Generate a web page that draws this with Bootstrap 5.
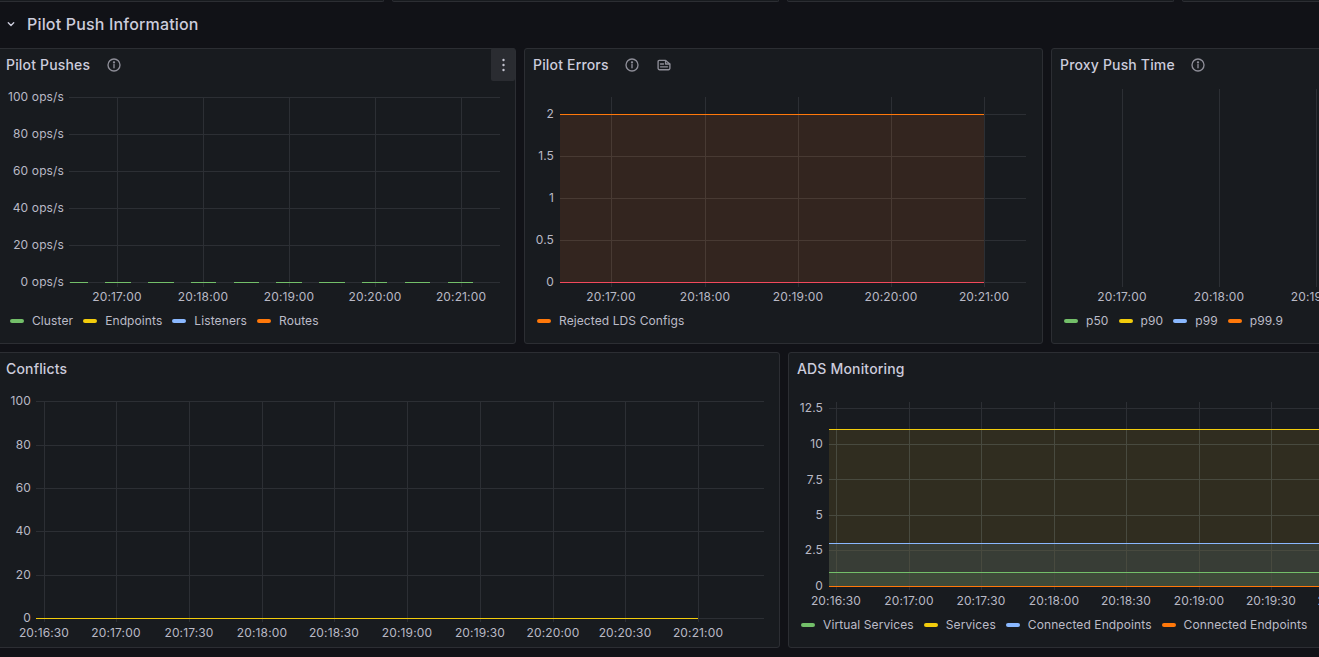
<!DOCTYPE html>
<html lang="en">
<head>
<meta charset="utf-8">
<title>Pilot Push Information</title>
<link href="https://cdn.jsdelivr.net/npm/bootstrap@5.3.0/dist/css/bootstrap.min.css" rel="stylesheet">
<style>
html, body { height: 100%; }
body { background: #111217; color: #ccccdc; font-family: Inter, "Liberation Sans", sans-serif; overflow: hidden; letter-spacing: .01071em; }
.dash-canvas { margin-left: -3px; width: 1700px; }
.stub-row { height: 2px; }
.stub-piece { width: 387px; height: 2px; border: 1px solid #2c2e33; border-top: 0; border-radius: 0 0 3px 3px; background: #181b1f; }
.section-row { height: 46px; padding-left: 9px; padding-bottom: 2px; font-size: 16px; font-weight: 500; color: #ccccdc; line-height: 1; }
.section-chevron { width: 10px; height: 10px; margin-right: 11px; }
.dash-panel { --bs-card-bg: #181b1f; --bs-card-border-color: #2c2e33; --bs-card-border-radius: 3px; --bs-card-color: #ccccdc; height: 296px; flex: none; }
.w-third { width: 519px; }
.w-half { width: 783px; }
.panel-head { height: 32px; padding-left: 8px; font-size: 14px; font-weight: 500; color: #ccccdc; }
.head-title { margin-top: -2px; }
.head-icon { width: 14px; height: 14px; margin-left: 16.6px; color: #8e8e98; flex: none; }
.head-icon + .head-icon { margin-left: 18px; }
.kebab-btn { width: 24px; height: 33px; margin-top: -1px; background: #2a2c31; border-radius: 2px; }
.plot { display: block; overflow: hidden; }
.plot text { font-family: Inter, "Liberation Sans", sans-serif; font-size: 12px; fill: #b9b9c5; letter-spacing: .13px; }
.gl { stroke: #2c2f34; stroke-width: 1; fill: none; shape-rendering: crispEdges; }
.legend-row { height: 22px; padding-left: 12px; gap: 10px; font-size: 12px; letter-spacing: .1px; color: #bcbcc8; white-space: nowrap; }
.swatch { width: 14px; height: 4px; border-radius: 2px; margin-right: 8px; flex: none; }
.c-green { background: #73bf69; }
.c-yellow { background: #f2cc0c; }
.c-blue { background: #8ab8ff; }
.c-orange { background: #ff780a; }
</style>
</head>
<body>
<div class="dash-canvas">
  <div class="stub-row d-flex gap-2">
    <div class="stub-piece"></div><div class="stub-piece"></div><div class="stub-piece"></div><div class="stub-piece"></div>
  </div>
  <div class="section-row d-flex align-items-center">
    <svg class="section-chevron" viewBox="0 0 10 10" fill="none" stroke="#ccccdc" stroke-width="1.4" stroke-linecap="round" stroke-linejoin="round"><path d="M2.3 3.8 5 6.4 7.7 3.8"/></svg>
    <span>Pilot Push Information</span>
  </div>

  <div class="d-flex gap-2 mb-2">
    <div class="card dash-panel w-third">
      <div class="panel-head d-flex align-items-center">
        <span class="head-title">Pilot Pushes</span>
        <svg class="head-icon" viewBox="0 0 14 14" fill="none" stroke="currentColor" stroke-width="1.35"><circle cx="7" cy="7" r="6"/><path d="M7 6.6v3.2" stroke-linecap="round"/><circle cx="7" cy="4.3" r=".5" fill="currentColor"/></svg>
        <div class="kebab-btn ms-auto d-flex flex-column align-items-center justify-content-center gap-1">
          <svg width="3" height="14" viewBox="0 0 3 14" fill="#c4c4d0"><circle cx="1.5" cy="2" r="1.2"/><circle cx="1.5" cy="7" r="1.2"/><circle cx="1.5" cy="12" r="1.2"/></svg>
        </div>
      </div>
      <svg class="plot" width="517" height="229" viewBox="-2 81 517 229">
        <path class="gl" d="M69 97.5H500M69 134.5H500M69 171.5H500M69 208.5H500M69 245.5H500M69 282.5H500M117.5 97V287M203.5 97V287M289.5 97V287M375.5 97V287M461.5 97V287"/>
        <path d="M70 282.5H88M105 282.5H131M148 282.5H174M191 282.5H216M234 282.5H259M276 282.5H302M319 282.5H345M362 282.5H387M405 282.5H430M448 282.5H473" stroke="#73bf69" stroke-width="1" fill="none"/>
        <g text-anchor="end">
          <text x="64" y="101">100 ops/s</text><text x="64" y="138">80 ops/s</text><text x="64" y="175">60 ops/s</text><text x="64" y="212">40 ops/s</text><text x="64" y="249">20 ops/s</text><text x="64" y="286">0 ops/s</text>
        </g>
        <g text-anchor="middle">
          <text x="117" y="301">20:17:00</text><text x="203" y="301">20:18:00</text><text x="289" y="301">20:19:00</text><text x="375" y="301">20:20:00</text><text x="461" y="301">20:21:00</text>
        </g>
      </svg>
      <div class="legend-row d-flex align-items-center">
        <div class="d-flex align-items-center"><i class="swatch c-green"></i>Cluster</div>
        <div class="d-flex align-items-center"><i class="swatch c-yellow"></i>Endpoints</div>
        <div class="d-flex align-items-center"><i class="swatch c-blue"></i>Listeners</div>
        <div class="d-flex align-items-center"><i class="swatch c-orange"></i>Routes</div>
      </div>
    </div>

    <div class="card dash-panel w-third">
      <div class="panel-head d-flex align-items-center">
        <span class="head-title">Pilot Errors</span>
        <svg class="head-icon" viewBox="0 0 14 14" fill="none" stroke="currentColor" stroke-width="1.35"><circle cx="7" cy="7" r="6"/><path d="M7 6.6v3.2" stroke-linecap="round"/><circle cx="7" cy="4.3" r=".5" fill="currentColor"/></svg>
        <svg class="head-icon" viewBox="0 0 14 14" fill="none" stroke="currentColor" stroke-width="1.35" stroke-linejoin="round"><path d="M2.2 2.4H8.6L12.9 6V10.2a1.5 1.5 0 0 1-1.5 1.5H2.6A1.5 1.5 0 0 1 1.1 10.2V3.5A1.1 1.1 0 0 1 2.2 2.4Z"/><path d="M3.5 6H6.5M3.5 8.8H10.5M8.6 2.6V6H12.6" stroke-linecap="round"/></svg>
      </div>
      <svg class="plot" width="517" height="229" viewBox="525 81 517 229">
        <rect x="560" y="114" width="424" height="169" fill="#33251f"/>
        <path class="gl" d="M560 114.5H1026M560 156.5H1026M560 198.5H1026M560 240.5H1026M560 282.5H1026M611.5 97V287M705.5 97V287M798.5 97V287M891.5 97V287M984.5 97V287"/>
        <path class="gl" style="stroke:#483a33" d="M560 156.5H984M560 198.5H984M560 240.5H984M611.5 114V283M705.5 114V283M798.5 114V283M891.5 114V283"/>
        <path d="M560 114.5H984" stroke="#ff780a" stroke-width="1" fill="none"/>
        <path d="M560 282.5H984" stroke="#f2495c" stroke-width="1" fill="none"/>
        <g text-anchor="end">
          <text x="554" y="118">2</text><text x="554" y="160">1.5</text><text x="554" y="202">1</text><text x="554" y="244">0.5</text><text x="554" y="286">0</text>
        </g>
        <g text-anchor="middle">
          <text x="611" y="301">20:17:00</text><text x="705" y="301">20:18:00</text><text x="798" y="301">20:19:00</text><text x="891" y="301">20:20:00</text><text x="984" y="301">20:21:00</text>
        </g>
      </svg>
      <div class="legend-row d-flex align-items-center">
        <div class="d-flex align-items-center"><i class="swatch c-orange"></i>Rejected LDS Configs</div>
      </div>
    </div>

    <div class="card dash-panel w-third">
      <div class="panel-head d-flex align-items-center">
        <span class="head-title">Proxy Push Time</span>
        <svg class="head-icon" viewBox="0 0 14 14" fill="none" stroke="currentColor" stroke-width="1.35"><circle cx="7" cy="7" r="6"/><path d="M7 6.6v3.2" stroke-linecap="round"/><circle cx="7" cy="4.3" r=".5" fill="currentColor"/></svg>
      </div>
      <svg class="plot" width="517" height="229" viewBox="1052 81 517 229">
        <path class="gl" d="M1122.5 89V287M1219.5 89V287M1316.5 89V287"/>
        <g text-anchor="middle">
          <text x="1122" y="301">20:17:00</text><text x="1219" y="301">20:18:00</text><text x="1316" y="301">20:19:00</text>
        </g>
      </svg>
      <div class="legend-row d-flex align-items-center">
        <div class="d-flex align-items-center"><i class="swatch c-green"></i>p50</div>
        <div class="d-flex align-items-center"><i class="swatch c-yellow"></i>p90</div>
        <div class="d-flex align-items-center"><i class="swatch c-blue"></i>p99</div>
        <div class="d-flex align-items-center"><i class="swatch c-orange"></i>p99.9</div>
      </div>
    </div>
  </div>

  <div class="d-flex gap-2">
    <div class="card dash-panel w-half">
      <div class="panel-head d-flex align-items-center"><span class="head-title">Conflicts</span></div>
      <svg class="plot" width="781" height="262" viewBox="-2 385 781 262">
        <path class="gl" d="M36 401.5H764M36 445.5H764M36 488.5H764M36 531.5H764M36 575.5H764M44.5 401V622M116.5 401V622M189.5 401V622M262.5 401V622M334.5 401V622M407.5 401V622M480.5 401V622M553.5 401V622M625.5 401V622M698.5 401V622"/>
        <path d="M36 618.5H698" stroke="#f2cc0c" stroke-width="1" fill="none"/>
        <path class="gl" d="M698 618.5H764"/>
        <g text-anchor="end">
          <text x="31" y="405">100</text><text x="31" y="449">80</text><text x="31" y="492">60</text><text x="31" y="535">40</text><text x="31" y="579">20</text><text x="31" y="622">0</text>
        </g>
        <g text-anchor="middle">
          <text x="44" y="637">20:16:30</text><text x="116" y="637">20:17:00</text><text x="189" y="637">20:17:30</text><text x="262" y="637">20:18:00</text><text x="334" y="637">20:18:30</text><text x="407" y="637">20:19:00</text><text x="480" y="637">20:19:30</text><text x="553" y="637">20:20:00</text><text x="625" y="637">20:20:30</text><text x="698" y="637">20:21:00</text>
        </g>
      </svg>
    </div>

    <div class="card dash-panel w-half">
      <div class="panel-head d-flex align-items-center"><span class="head-title">ADS Monitoring</span></div>
      <svg class="plot" width="781" height="229" viewBox="789 385 781 229">
        <rect x="829" y="429" width="741" height="114" fill="#302d20"/>
        <rect x="829" y="543" width="741" height="29" fill="#383d36"/>
        <rect x="829" y="572" width="741" height="15" fill="#3e4a39"/>
        <path class="gl" d="M829 408.5H1570M829 444.5H1570M836.5 402V590M909.5 402V590M981.5 402V590M1054.5 402V590M1126.5 402V590M1199.5 402V590M1271.5 402V590"/>
        <path class="gl" style="stroke:#484a3f" d="M829 479.5H1570M829 515.5H1570M829 550.5H1570M829 444.5H1570M836.5 429V587M909.5 429V587M981.5 429V587M1054.5 429V587M1126.5 429V587M1199.5 429V587M1271.5 429V587"/>
        <path d="M829 429.5H1570" stroke="#f2cc0c" stroke-width="1" fill="none"/>
        <path d="M829 543.5H1570" stroke="#8ab8ff" stroke-width="1" fill="none"/>
        <path d="M829 572.5H1570" stroke="#73bf69" stroke-width="1" fill="none"/>
        <path d="M829 586.5H1570" stroke="#ff780a" stroke-width="1" fill="none"/>
        <g text-anchor="end">
          <text x="823" y="412">12.5</text><text x="823" y="448">10</text><text x="823" y="484">7.5</text><text x="823" y="519">5</text><text x="823" y="554">2.5</text><text x="823" y="590">0</text>
        </g>
        <g text-anchor="middle">
          <text x="836" y="605">20:16:30</text><text x="909" y="605">20:17:00</text><text x="981" y="605">20:17:30</text><text x="1054" y="605">20:18:00</text><text x="1126" y="605">20:18:30</text><text x="1199" y="605">20:19:00</text><text x="1271" y="605">20:19:30</text><text x="1344" y="605">20:20:00</text>
        </g>
      </svg>
      <div class="legend-row d-flex align-items-center">
        <div class="d-flex align-items-center"><i class="swatch c-green"></i>Virtual Services</div>
        <div class="d-flex align-items-center"><i class="swatch c-yellow"></i>Services</div>
        <div class="d-flex align-items-center"><i class="swatch c-blue"></i>Connected Endpoints</div>
        <div class="d-flex align-items-center"><i class="swatch c-orange"></i>Connected Endpoints</div>
      </div>
    </div>
  </div>
</div>
<script src="https://cdn.jsdelivr.net/npm/bootstrap@5.3.0/dist/js/bootstrap.bundle.min.js"></script>
</body>
</html>
